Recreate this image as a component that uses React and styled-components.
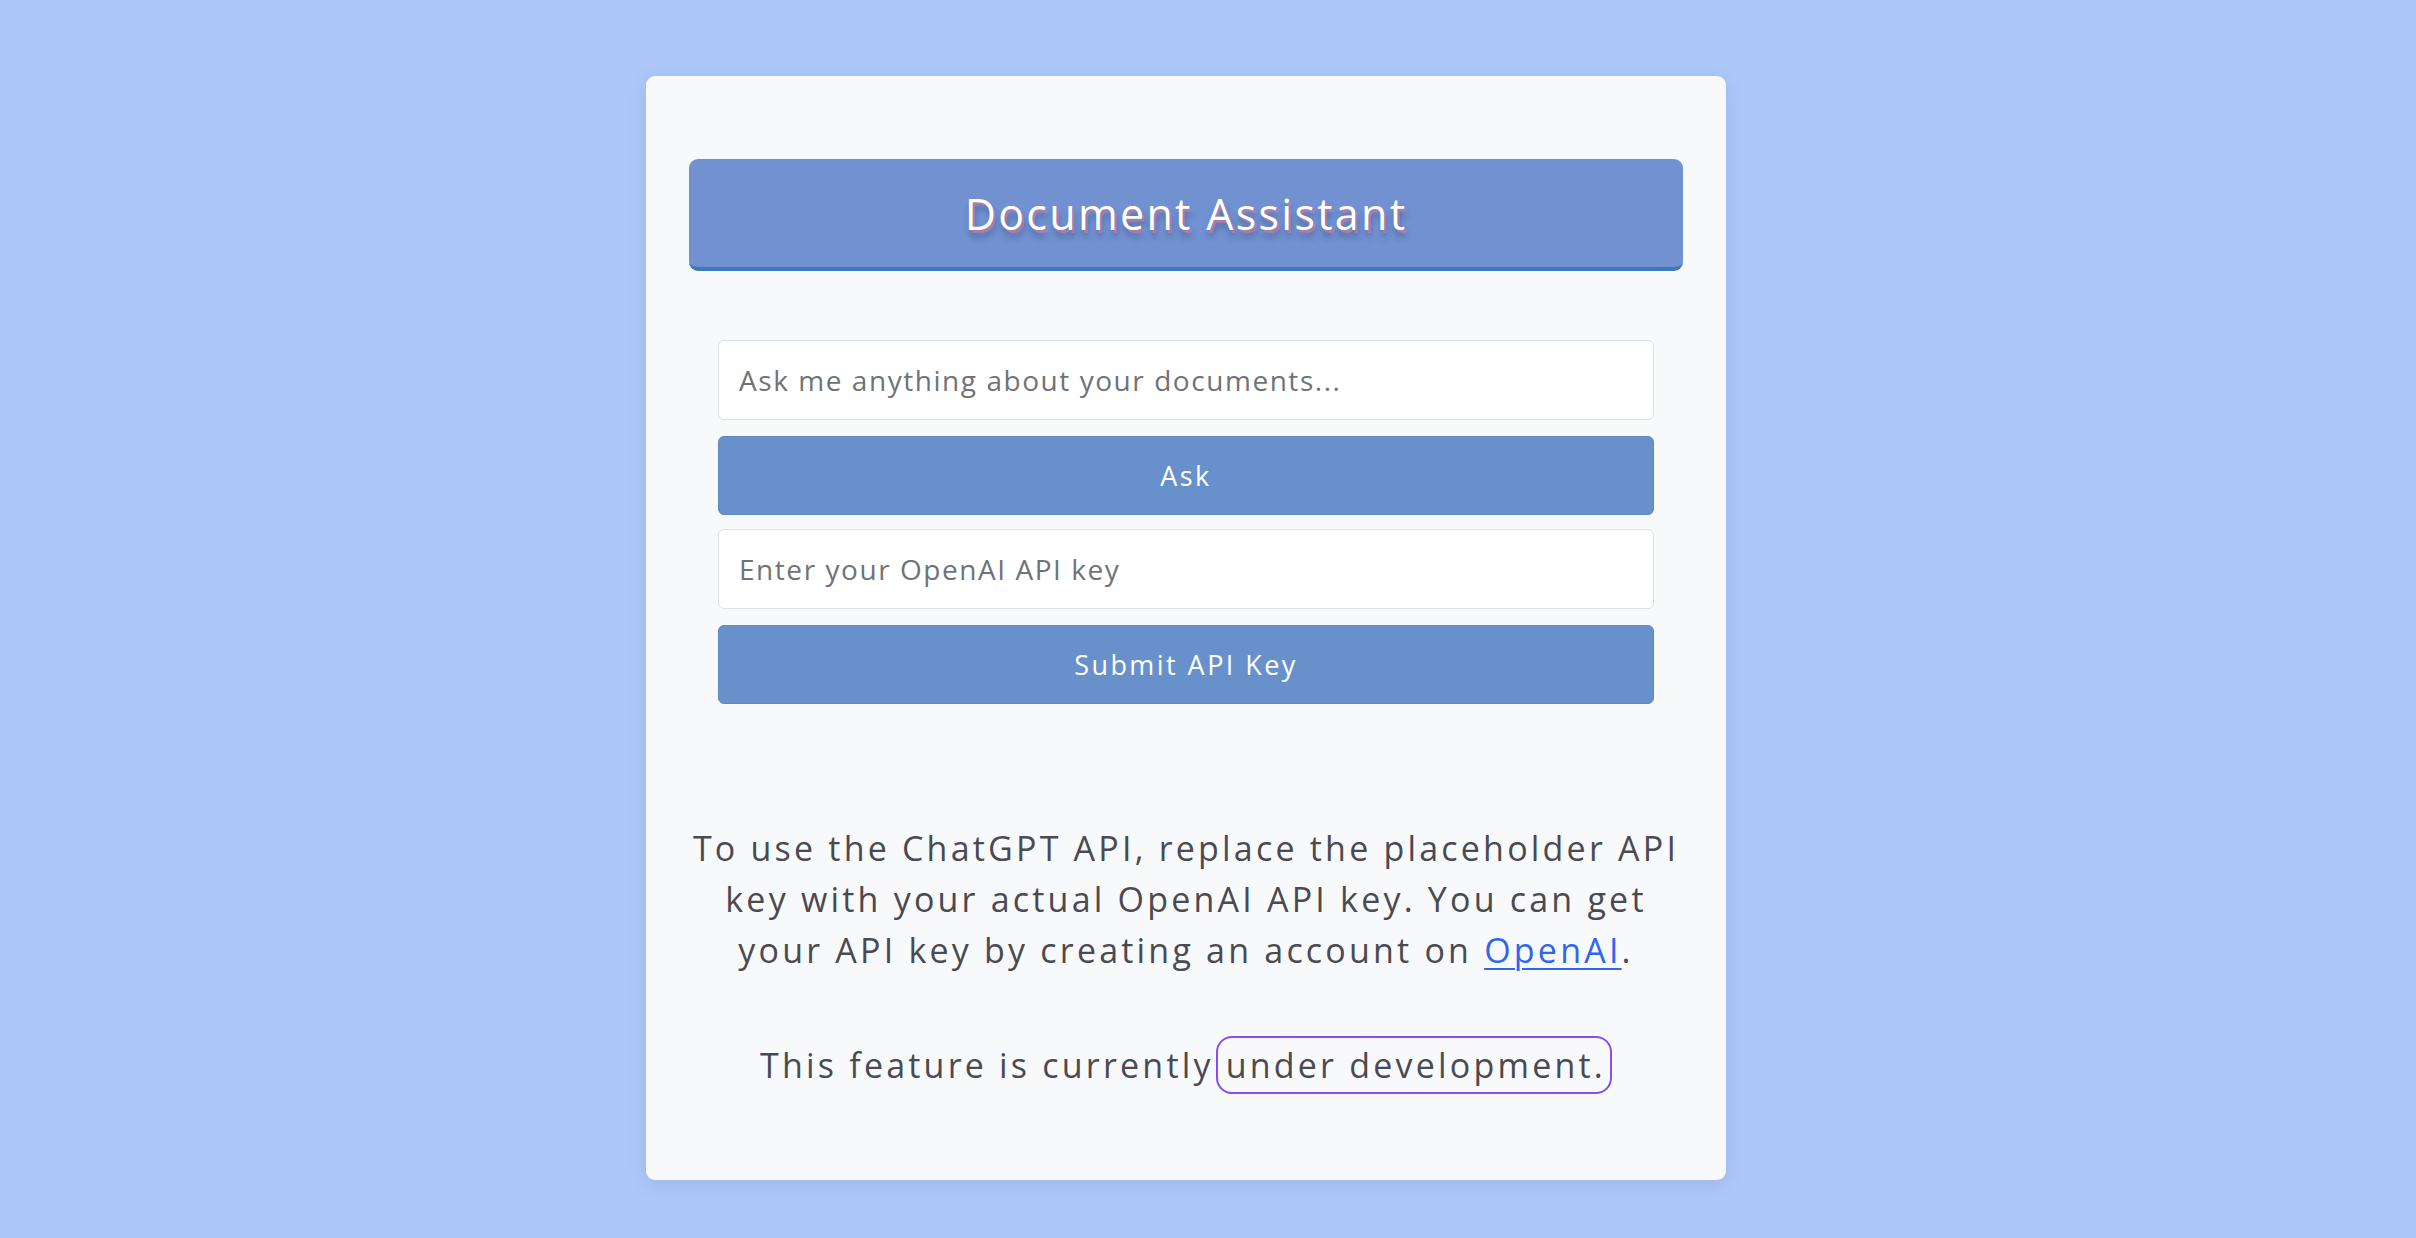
import React from "react";
import styled, { createGlobalStyle } from "styled-components";

const Global = createGlobalStyle`
  html, body { margin: 0; padding: 0; }
  body {
    background: #adc8f8;
    font-family: "Open Sans", "Liberation Sans", sans-serif;
  }
`;

const Page = styled.div`
  display: flex;
  justify-content: center;
  padding: 76px 44px 0 0;
  height: 1238px;
  box-sizing: border-box;
  overflow: hidden;
`;

const Card = styled.main`
  width: 1080px;
  box-sizing: border-box;
  background: #f8f9fa;
  border-radius: 9px;
  padding: 83px 43px 89px;
  box-shadow: 0 4px 18px rgba(60, 80, 130, 0.14);
  align-self: flex-start;
`;

const Header = styled.header`
  height: 112px;
  box-sizing: border-box;
  background: #7191d1;
  border-bottom: 4px solid #3d7ab8;
  border-radius: 9px;
  display: flex;
  align-items: center;
  justify-content: center;
`;

const Title = styled.h1`
  margin: 0;
  color: #ffffff;
  font-size: 43px;
  font-weight: 400;
  letter-spacing: 2.3px;
  text-shadow: 2px 3px 0 rgba(185, 125, 165, 0.75), 2px 7px 6px rgba(40, 50, 90, 0.45);
`;

const Form = styled.form`
  display: flex;
  flex-direction: column;
  padding: 69px 29px 0;
`;

const Input = styled.input`
  height: 80px;
  box-sizing: border-box;
  border: 1px solid #dee2e6;
  border-radius: 6px;
  background: #ffffff;
  padding: 0 20px;
  margin-bottom: 16px;
  font-family: "Open Sans", "Liberation Sans", sans-serif;
  font-size: 28px;
  letter-spacing: 1.55px;
  color: #333;
  outline: none;
  &::placeholder { color: #6f7378; }
`;

const Button = styled.button`
  height: 79px;
  box-sizing: border-box;
  border: 1px solid #6089c6;
  border-radius: 6px;
  background: #6891cb;
  color: #ffffff;
  font-family: "Open Sans", "Liberation Sans", sans-serif;
  font-size: 27px;
  letter-spacing: 2.45px;
  margin-bottom: ${(p) => (p.$last ? "0" : "14px")};
  cursor: pointer;
`;

const Info = styled.p`
  margin: ${(p) => (p.$first ? "119px 0 0" : "64px 0 0")};
  text-align: center;
  color: #4a4a52;
  font-size: 34px;
  line-height: 51px;
  letter-spacing: 3.2px;
`;

const Link = styled.a`
  color: #2f66ee;
  text-decoration: underline;
  text-decoration-thickness: 2px;
  text-underline-offset: 5px;
`;

const Highlight = styled.span`
  border: 2px solid #8450f0;
  border-radius: 16px;
  padding: 4px 4px 4px 8px;
  margin-left: 2px;
`;

export default function App() {
  return (
    <>
      <Global />
      <Page>
        <Card>
          <Header>
            <Title>Document Assistant</Title>
          </Header>
          <Form onSubmit={(e) => e.preventDefault()}>
            <Input placeholder="Ask me anything about your documents..." />
            <Button type="button">Ask</Button>
            <Input placeholder="Enter your OpenAI API key" />
            <Button type="button" $last>Submit API Key</Button>
          </Form>
          <Info $first>
            To use the ChatGPT API, replace the placeholder API
            <br />
            key with your actual OpenAI API key. You can get
            <br />
            your API key by creating an account on <Link href="#">OpenAI</Link>.
          </Info>
          <Info>
            This feature is currently<Highlight>under development.</Highlight>
          </Info>
        </Card>
      </Page>
    </>
  );
}
